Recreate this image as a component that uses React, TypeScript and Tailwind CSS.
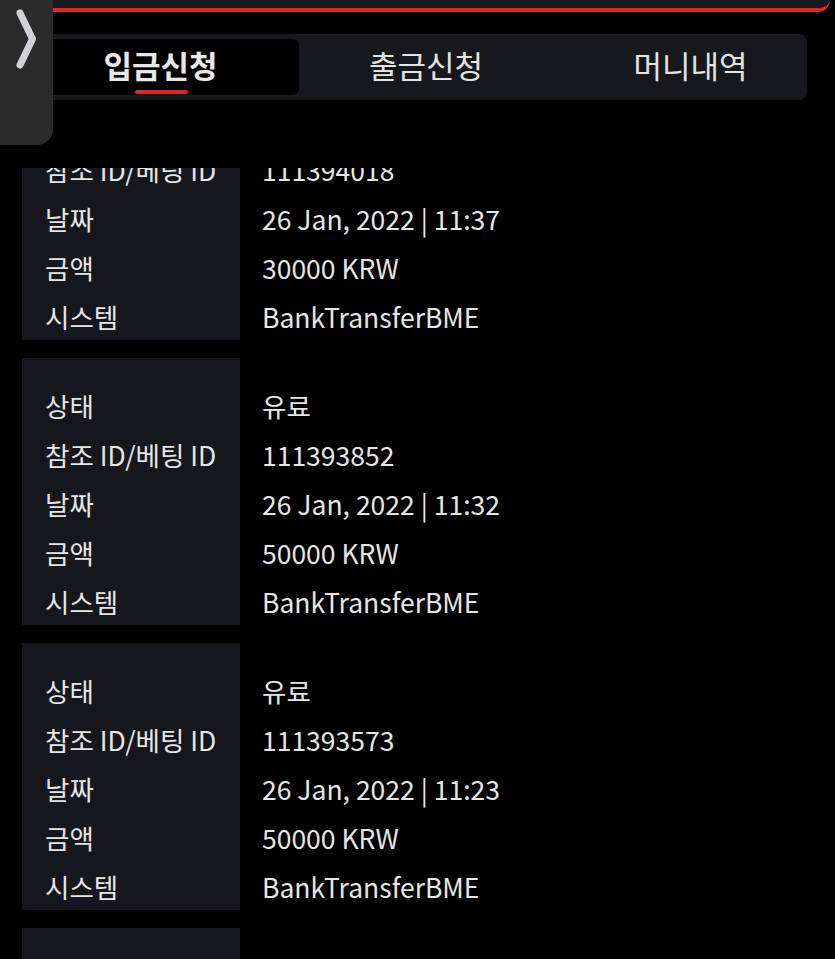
import React from "react";

type Rec = { status: string; id: string; date: string; amount: string; system: string };

const records: Rec[] = [
  { status: "유료", id: "111394018", date: "26 Jan, 2022 | 11:37", amount: "30000 KRW", system: "BankTransferBME" },
  { status: "유료", id: "111393852", date: "26 Jan, 2022 | 11:32", amount: "50000 KRW", system: "BankTransferBME" },
  { status: "유료", id: "111393573", date: "26 Jan, 2022 | 11:23", amount: "50000 KRW", system: "BankTransferBME" },
  { status: "유료", id: "111393410", date: "26 Jan, 2022 | 11:15", amount: "50000 KRW", system: "BankTransferBME" },
];

const labels = ["상태", "참조 ID/베팅 ID", "날짜", "금액", "시스템"];

function Card({ r }: { r: Rec }) {
  const values = [r.status, r.id, r.date, r.amount, r.system];
  return (
    <div className="flex h-[267px] shrink-0">
      <div className="w-[218px] bg-[#16171c] pt-[23px] pl-[23px]">
        {labels.map((l) => (
          <div key={l} className="h-[49px] flex items-center whitespace-nowrap">
            {l}
          </div>
        ))}
      </div>
      <div className="pt-[23px] pl-[22px]">
        {values.map((v, i) => (
          <div key={i} className="h-[49px] flex items-center whitespace-nowrap">
            {v}
          </div>
        ))}
      </div>
    </div>
  );
}

export default function App() {
  return (
    <div
      className="relative w-[835px] h-[959px] bg-black overflow-hidden text-[#e6e6e6] flex flex-col"
      style={{ fontFamily: '"Noto Sans CJK KR", "Noto Sans", sans-serif' }}
    >
      {/* top panel */}
      <div className="h-[12px] mr-[5px] bg-[#17191e] border-b-[4px] border-[#e3261d] rounded-br-[12px] shrink-0" />

      {/* tabs */}
      <div className="mt-[22px] ml-[23px] w-[784px] h-[66px] bg-[#17181c] rounded-[8px] p-[5px] flex shrink-0">
        <div className="relative w-[271px] h-full bg-black rounded-[6px] flex items-center justify-center pr-[6px] text-[31px] font-bold text-[#e8e8e8]">
          <span className="leading-none -mt-[6px]">입금신청</span>
          <div className="absolute bottom-[1px] left-[107px] w-[53px] h-[4px] rounded-full bg-[#e3261d]" />
        </div>
        <div className="w-[254px] h-full flex items-center justify-center text-[31px] text-[#e4e4e4]">
          <span className="leading-none -mt-[6px]">출금신청</span>
        </div>
        <div className="flex-1 h-full flex items-center justify-center pl-[26px] text-[31px] text-[#e4e4e4]">
          <span className="leading-none -mt-[6px]">머니내역</span>
        </div>
      </div>

      {/* scroll area */}
      <div className="mt-[68px] flex-1 overflow-hidden text-[26.5px]">
        <div className="-mt-[95px] ml-[22px] flex flex-col gap-[18px]">
          {records.map((r, i) => (
            <Card key={i} r={r} />
          ))}
        </div>
      </div>

      {/* side toggle */}
      <div className="absolute top-0 left-0 w-[53px] h-[145px] bg-[#2b2b2b] rounded-br-[16px]">
        <svg width="53" height="80" viewBox="0 0 53 80" className="absolute top-0 left-0">
          <path
            d="M20 13 L32.5 39 L20 65"
            fill="none"
            stroke="#d2d2d6"
            strokeWidth="7"
            strokeLinecap="round"
            strokeLinejoin="round"
          />
        </svg>
      </div>
    </div>
  );
}
